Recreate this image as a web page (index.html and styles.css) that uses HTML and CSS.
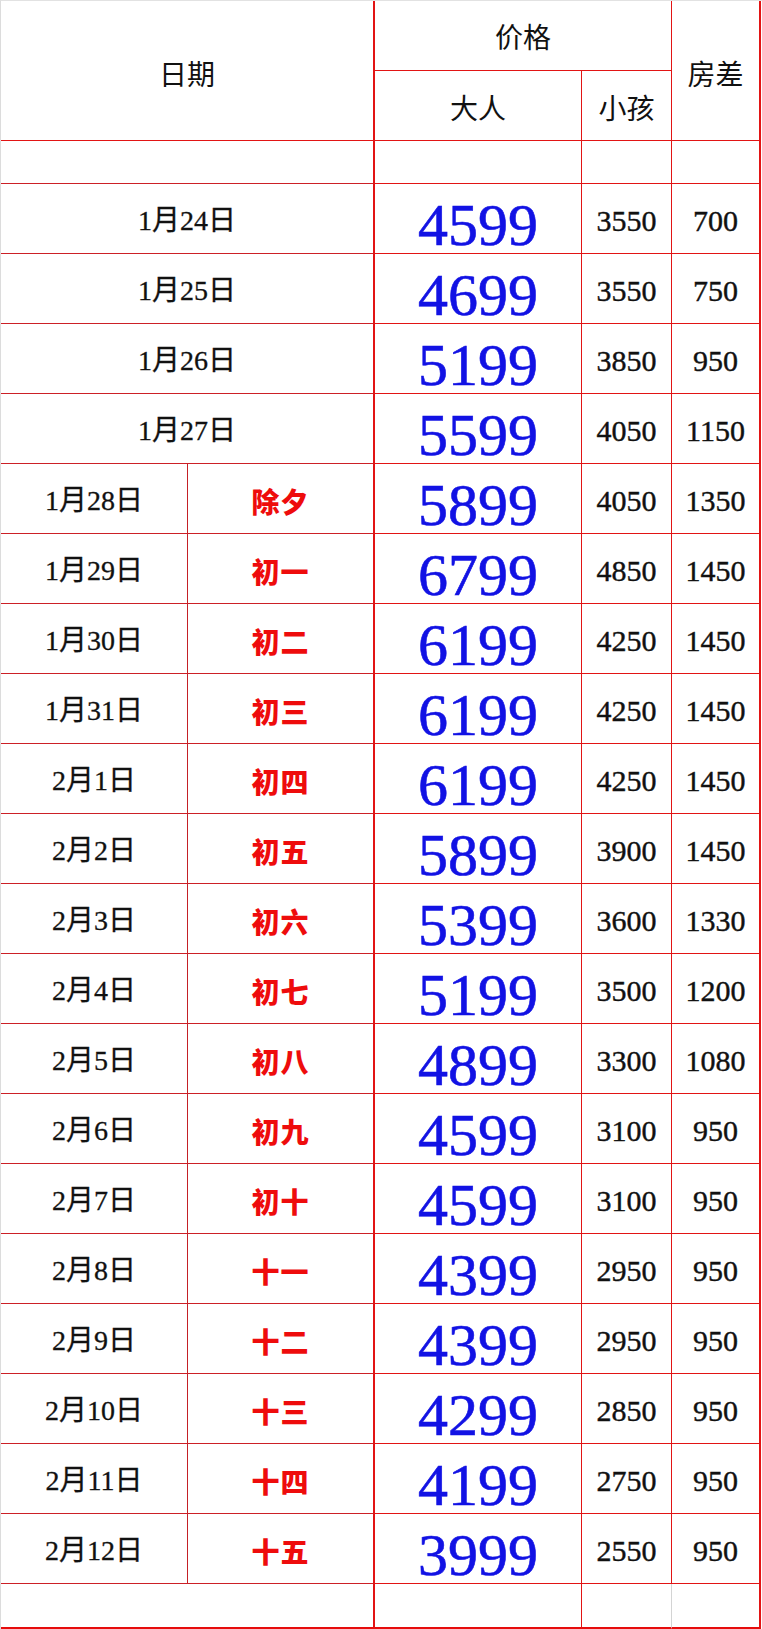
FILE: index.html
```html
<!DOCTYPE html>
<html lang="zh-CN">
<head>
<meta charset="utf-8">
<title>价格表</title>
<link rel="stylesheet" href="styles.css">
</head>
<body>
<div class="sheet">
  <div class="c h span2 rspan2 endl">日期</div>
  <div class="c h span2 top">价格</div>
  <div class="c h rspan2 endr">房差</div>
  <div class="c h sub">大人</div>
  <div class="c h sub">小孩</div>

  <div class="c span2 endl dl"></div>
  <div class="c"></div>
  <div class="c"></div>
  <div class="c endr"></div>

  <div class="c d span2 endl dl">1月24日</div><div class="c p">4599</div><div class="c n">3550</div><div class="c n endr">700</div>
  <div class="c d span2 endl dl">1月25日</div><div class="c p">4699</div><div class="c n">3550</div><div class="c n endr">750</div>
  <div class="c d span2 endl dl">1月26日</div><div class="c p">5199</div><div class="c n">3850</div><div class="c n endr">950</div>
  <div class="c d span2 endl dl">1月27日</div><div class="c p">5599</div><div class="c n">4050</div><div class="c n endr">1150</div>
  <div class="c d dl dr">1月28日</div><div class="c l endl dl">除夕</div><div class="c p">5899</div><div class="c n">4050</div><div class="c n endr">1350</div>
  <div class="c d dl dr">1月29日</div><div class="c l endl dl">初一</div><div class="c p">6799</div><div class="c n">4850</div><div class="c n endr">1450</div>
  <div class="c d dl dr">1月30日</div><div class="c l endl dl">初二</div><div class="c p">6199</div><div class="c n">4250</div><div class="c n endr">1450</div>
  <div class="c d dl dr">1月31日</div><div class="c l endl dl">初三</div><div class="c p">6199</div><div class="c n">4250</div><div class="c n endr">1450</div>
  <div class="c d dl dr">2月1日</div><div class="c l endl dl">初四</div><div class="c p">6199</div><div class="c n">4250</div><div class="c n endr">1450</div>
  <div class="c d dl dr">2月2日</div><div class="c l endl dl">初五</div><div class="c p">5899</div><div class="c n">3900</div><div class="c n endr">1450</div>
  <div class="c d dl dr">2月3日</div><div class="c l endl dl">初六</div><div class="c p">5399</div><div class="c n">3600</div><div class="c n endr">1330</div>
  <div class="c d dl dr">2月4日</div><div class="c l endl dl">初七</div><div class="c p">5199</div><div class="c n">3500</div><div class="c n endr">1200</div>
  <div class="c d dl dr">2月5日</div><div class="c l endl dl">初八</div><div class="c p">4899</div><div class="c n">3300</div><div class="c n endr">1080</div>
  <div class="c d dl dr">2月6日</div><div class="c l endl dl">初九</div><div class="c p">4599</div><div class="c n">3100</div><div class="c n endr">950</div>
  <div class="c d dl dr">2月7日</div><div class="c l endl dl">初十</div><div class="c p">4599</div><div class="c n">3100</div><div class="c n endr">950</div>
  <div class="c d dl dr">2月8日</div><div class="c l endl dl">十一</div><div class="c p">4399</div><div class="c n">2950</div><div class="c n endr">950</div>
  <div class="c d dl dr">2月9日</div><div class="c l endl dl">十二</div><div class="c p">4399</div><div class="c n">2950</div><div class="c n endr">950</div>
  <div class="c d dl dr">2月10日</div><div class="c l endl dl">十三</div><div class="c p">4299</div><div class="c n">2850</div><div class="c n endr">950</div>
  <div class="c d dl dr">2月11日</div><div class="c l endl dl">十四</div><div class="c p">4199</div><div class="c n">2750</div><div class="c n endr">950</div>
  <div class="c d dl dr">2月12日</div><div class="c l endl dl">十五</div><div class="c p">3999</div><div class="c n">2550</div><div class="c n endr">950</div>

  <div class="c span2 endl last"></div>
  <div class="c last"></div>
  <div class="c last grayr"></div>
  <div class="c last endr"></div>
</div>
</body>
</html>
```

FILE: styles.css
```css
html, body {
  margin: 0;
  padding: 0;
  background: #ffffff;
}

.sheet {
  width: 762px;
  height: 1629px;
  box-sizing: border-box;
  border-left: 1px solid #dcdcdc;
  border-top: 1px solid #e2e2e2;
  display: grid;
  grid-template-columns: 187px 187px 207px 90px 89px;
  grid-template-rows: 70px 70px 43px repeat(20, 70px) 45px;
  background: #ffffff;
}

.c {
  box-sizing: border-box;
  border-right: 1px solid #e21414;
  border-bottom: 1px solid #e21414;
  display: flex;
  align-items: center;
  justify-content: center;
  color: #111111;
  font-family: "Liberation Serif", "Noto Sans CJK SC", serif;
  line-height: 1;
  white-space: nowrap;
}

.span2 { grid-column: span 2; }
.rspan2 { grid-row: span 2; }

.endl { border-right: 2px solid #e21414; }
.endr { border-right: 2px solid #e21414; }

.dl { border-bottom-color: #cc2026; }
.dr { border-right-color: #c42026; }

.h {
  font-family: "Noto Sans CJK SC", sans-serif;
  font-size: 28px;
  font-weight: 400;
  color: #111111;
  padding-top: 4px;
}

.top { padding-top: 0; }
.sub { padding-top: 2px; }

.d {
  font-size: 28px;
  padding-top: 4px;
  -webkit-text-stroke: 0.3px #111111;
}

.l {
  font-family: "Noto Sans CJK SC", sans-serif;
  font-size: 28px;
  font-weight: 900;
  color: #ee0c0c;
  letter-spacing: 1px;
  padding-top: 4px;
}

.p {
  font-size: 60px;
  color: #1212e4;
  padding-top: 12px;
  -webkit-text-stroke: 0.6px #1212e4;
}

.n {
  font-size: 30px;
  padding-top: 4px;
  -webkit-text-stroke: 0.4px #111111;
}

.last {
  border-bottom: 2px solid #e60c0c;
}

.grayr {
  border-right-color: #d4d4d4;
}
```
